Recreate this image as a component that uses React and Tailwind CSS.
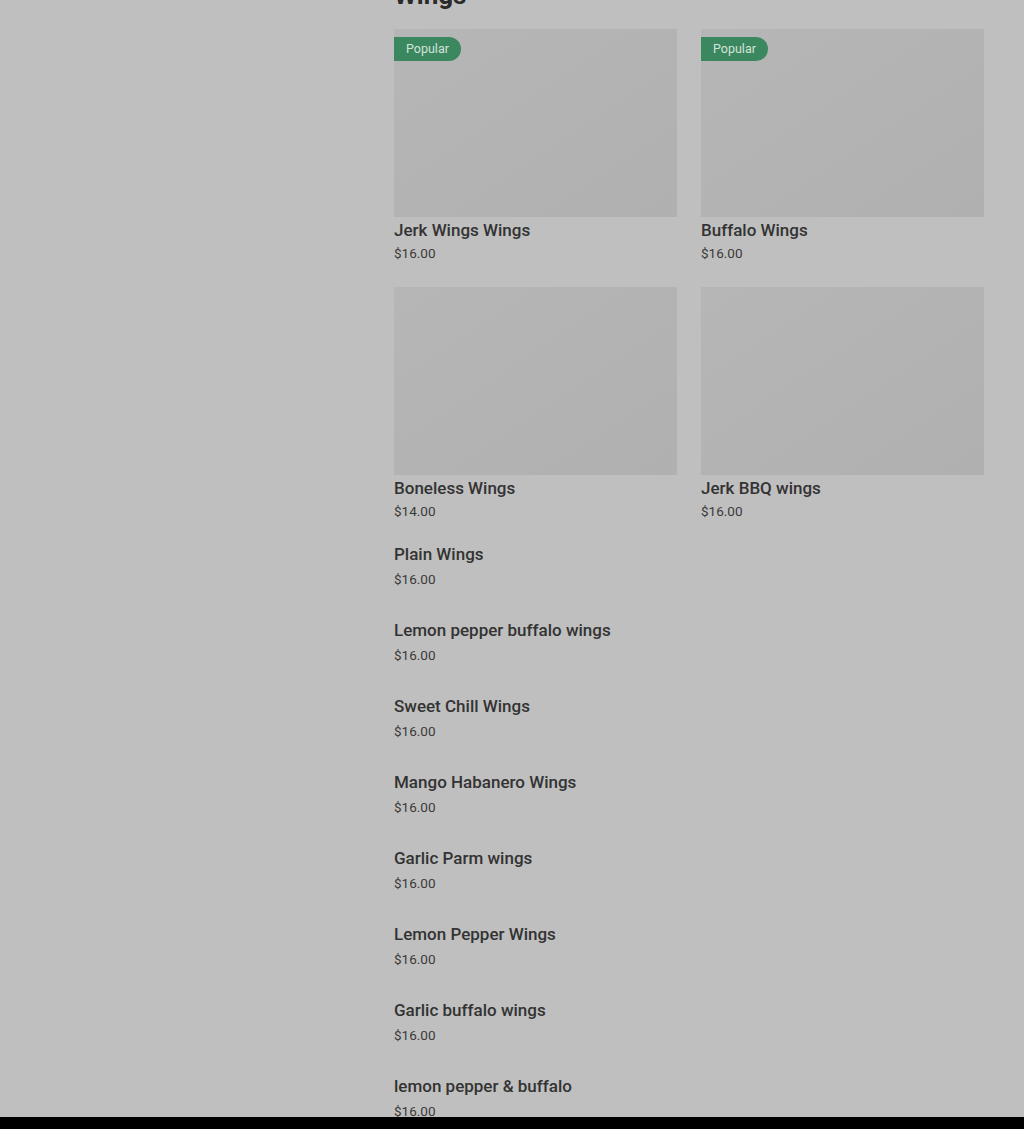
const featured = [
  { name: "Jerk Wings Wings", price: "$16.00", popular: true },
  { name: "Buffalo Wings", price: "$16.00", popular: true },
  { name: "Boneless Wings", price: "$14.00", popular: false },
  { name: "Jerk BBQ wings", price: "$16.00", popular: false },
];

const others = [
  { name: "Plain Wings", price: "$16.00" },
  { name: "Lemon pepper buffalo wings", price: "$16.00" },
  { name: "Sweet Chill Wings", price: "$16.00" },
  { name: "Mango Habanero Wings", price: "$16.00" },
  { name: "Garlic Parm wings", price: "$16.00" },
  { name: "Lemon Pepper Wings", price: "$16.00" },
  { name: "Garlic buffalo wings", price: "$16.00" },
  { name: "lemon pepper & buffalo", price: "$16.00" },
];

function Card({ item }) {
  return (
    <div className="flex flex-col">
      <div className="relative h-[188px] bg-gradient-to-br from-[#b6b6b6] to-[#b0b0b0]">
        {item.popular && (
          <span className="absolute left-0 top-[8px] flex h-[24px] items-center rounded-r-full rounded-l-[3px] bg-[#3b8760] pl-[12px] pr-[12px] text-[12.5px] text-[#d3e4d9]">
            Popular
          </span>
        )}
      </div>
      <div className="mt-[2px] text-[17px] leading-[22px] font-medium text-[#333]">{item.name}</div>
      <div className="mt-[2px] text-[13.5px] leading-[20px] text-[#3a3a3a]">{item.price}</div>
    </div>
  );
}

export default function App() {
  return (
    <div className="flex h-[1129px] flex-col overflow-hidden bg-[#bfbfbf]" style={{ fontFamily: "Roboto, 'Liberation Sans', sans-serif" }}>
      <div className="flex-1 overflow-hidden">
        <div className="ml-[394px] w-[590px]">
          <h2 className="-mt-[22px] text-[26px] leading-[34px] font-bold text-[#2a2a2a]">Wings</h2>
          <div className="mt-[17px] grid grid-cols-2 gap-x-[24px] gap-y-[24px]">
            {featured.map((item) => (
              <Card key={item.name} item={item} />
            ))}
          </div>
          <div className="mt-[22px] flex flex-col gap-[30px]">
            {others.map((item) => (
              <div key={item.name} className="flex flex-col">
                <div className="text-[17px] leading-[22px] font-medium text-[#333]">{item.name}</div>
                <div className="mt-[4px] text-[13.5px] leading-[20px] text-[#3a3a3a]">{item.price}</div>
              </div>
            ))}
          </div>
        </div>
      </div>
      <div className="h-[12px] bg-black" />
    </div>
  );
}
